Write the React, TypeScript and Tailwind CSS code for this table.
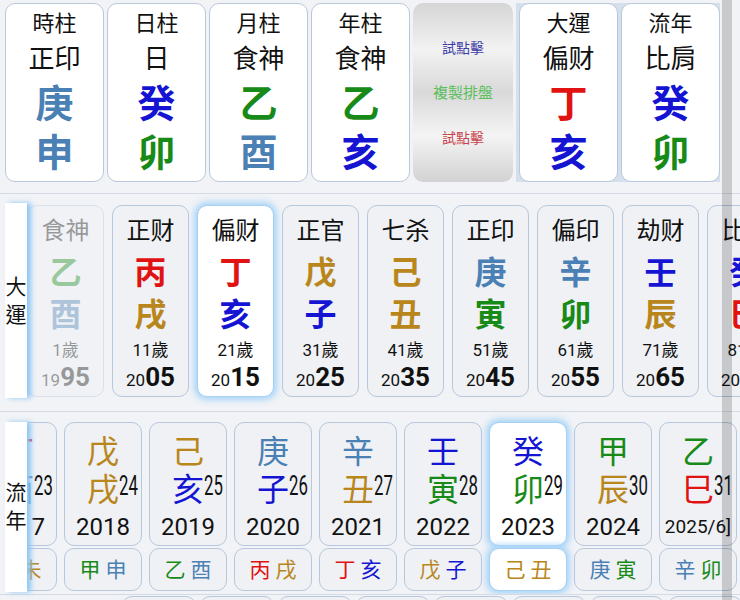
const COLOR: Record<string, string> = {
  甲: "text-[#178a17]",
  乙: "text-[#178a17]",
  寅: "text-[#178a17]",
  卯: "text-[#178a17]",
  丙: "text-[#e01212]",
  丁: "text-[#e01212]",
  巳: "text-[#e01212]",
  午: "text-[#e01212]",
  戊: "text-[#b8861a]",
  己: "text-[#b8861a]",
  辰: "text-[#b8861a]",
  戌: "text-[#b8861a]",
  丑: "text-[#b8861a]",
  未: "text-[#b8861a]",
  庚: "text-[#4a80b4]",
  辛: "text-[#4a80b4]",
  申: "text-[#4a80b4]",
  酉: "text-[#4a80b4]",
  壬: "text-[#1414d2]",
  癸: "text-[#1414d2]",
  子: "text-[#1414d2]",
  亥: "text-[#1414d2]",
};

const pillars = [
  { title: "時柱", god: "正印", stem: "庚", branch: "申" },
  { title: "日柱", god: "日", stem: "癸", branch: "卯" },
  { title: "月柱", god: "食神", stem: "乙", branch: "酉" },
  { title: "年柱", god: "食神", stem: "乙", branch: "亥" },
];

const luck = [
  { god: "食神", sb: "乙酉", age: 1, year: "1995", faded: true },
  { god: "正财", sb: "丙戌", age: 11, year: "2005" },
  { god: "偏财", sb: "丁亥", age: 21, year: "2015", active: true },
  { god: "正官", sb: "戊子", age: 31, year: "2025" },
  { god: "七杀", sb: "己丑", age: 41, year: "2035" },
  { god: "正印", sb: "庚寅", age: 51, year: "2045" },
  { god: "偏印", sb: "辛卯", age: 61, year: "2055" },
  { god: "劫财", sb: "壬辰", age: 71, year: "2065" },
  { god: "比肩", sb: "癸巳", age: 81, year: "2075" },
];

const years = [
  { sb: "丁酉", age: 23, year: "2017", sub: "癸未" },
  { sb: "戊戌", age: 24, year: "2018", sub: "甲申" },
  { sb: "己亥", age: 25, year: "2019", sub: "乙酉" },
  { sb: "庚子", age: 26, year: "2020", sub: "丙戌" },
  { sb: "辛丑", age: 27, year: "2021", sub: "丁亥" },
  { sb: "壬寅", age: 28, year: "2022", sub: "戊子" },
  { sb: "癸卯", age: 29, year: "2023", sub: "己丑", active: true },
  { sb: "甲辰", age: 30, year: "2024", sub: "庚寅" },
  { sb: "乙巳", age: 31, year: "2025/6]", sub: "辛卯" },
];

function PillarCard({ title, god, stem, branch }: { title: string; god: string; stem: string; branch: string }) {
  return (
    <div className="flex h-[179px] w-[99px] shrink-0 flex-col items-center rounded-[10px] border border-[#b9c8dc] bg-white pt-[6px] text-[#111]">
      <div className="text-[22px] leading-[28px]">{title}</div>
      <div className="mt-[4px] text-[26px] leading-[34px]">{god}</div>
      <div className={`mt-[4px] text-[38px] font-bold leading-[48px] ${COLOR[stem]}`}>{stem}</div>
      <div className={`mt-[1px] text-[38px] font-bold leading-[48px] ${COLOR[branch]}`}>{branch}</div>
    </div>
  );
}

function SideLabel({ text, className }: { text: string; className: string }) {
  return (
    <div
      className={`relative z-10 ml-[5px] flex w-[22px] shrink-0 flex-col items-center justify-center bg-white text-[21px] leading-[28px] text-[#111] shadow-[4px_0_5px_#8cc6f4] ${className}`}
    >
      {text.split("").map((c) => (
        <span key={c}>{c}</span>
      ))}
    </div>
  );
}

function LuckCard({ god, sb, age, year, faded, active }: (typeof luck)[number] & { active?: boolean; faded?: boolean }) {
  return (
    <div
      className={`flex h-[192px] w-[77px] shrink-0 flex-col items-center rounded-[10px] border pt-[11px] text-[#111] ${
        active
          ? "border-[#a6d0f5] bg-white shadow-[0_0_6px_3px_#a9d5f8]"
          : "border-[#b7c7dc] bg-[#eff1f5]"
      } ${faded ? "opacity-40" : ""}`}
    >
      <div className="text-[24px] leading-[28px]">{god}</div>
      <div className={`mt-[7px] text-[32px] font-bold leading-[42px] ${COLOR[sb[0]]}`}>{sb[0]}</div>
      <div className={`text-[32px] font-bold leading-[42px] ${COLOR[sb[1]]}`}>{sb[1]}</div>
      <div className="mt-[2px] text-[17px] leading-[24px]">{age}歲</div>
      <div className="leading-[30px]">
        <span className="text-[17px]">{year.slice(0, 2)}</span>
        <span className="text-[26px] font-bold">{year.slice(2)}</span>
      </div>
    </div>
  );
}

function YearColumn({ sb, age, year, sub, active }: (typeof years)[number] & { active?: boolean }) {
  const box = active
    ? "border-[#a6d0f5] bg-white shadow-[0_0_6px_3px_#a9d5f8]"
    : "border-[#b7c7dc] bg-[#eff1f5]";
  return (
    <div className="flex w-[78px] shrink-0 flex-col gap-[2px]">
      <div className={`flex h-[124px] flex-col items-center rounded-[10px] border pt-[10px] text-[#111] ${box}`}>
        <div className={`text-[32px] leading-[38px] ${COLOR[sb[0]]}`}>{sb[0]}</div>
        <div className={`relative text-[32px] leading-[38px] ${COLOR[sb[1]]}`}>
          {sb[1]}
          <span className="absolute left-full top-[1px] origin-left scale-x-[0.6] text-[28px] leading-[28px] text-[#111]">
            {age}
          </span>
        </div>
        <div className={`mt-[3px] leading-[30px] ${year.length > 4 ? "text-[19px]" : "text-[24px]"}`}>{year}</div>
      </div>
      <div className={`flex h-[43px] items-center justify-center gap-[5px] rounded-[10px] border text-[21px] leading-[28px] ${box}`}>
        <span className={COLOR[sub[0]]}>{sub[0]}</span>
        <span className={COLOR[sub[1]]}>{sub[1]}</span>
      </div>
    </div>
  );
}

export default function App() {
  return (
    <div className="relative h-[600px] w-[740px] overflow-hidden bg-[#f1f3f6] font-['Roboto','Noto_Sans_CJK_TC',sans-serif]">
      {/* four pillars + luck */}
      <div className="flex h-[193px] gap-[3px] pl-[5px] pt-[3px]">
        {pillars.map((p) => (
          <PillarCard key={p.title} {...p} />
        ))}
        <div className="flex h-[179px] w-[100px] shrink-0 flex-col items-center justify-center gap-[25px] rounded-[10px] bg-[linear-gradient(180deg,#d5d5d5_0%,#f2f2f2_26%,#d9d9d9_50%,#f4f4f4_74%,#d2d2d2_100%)] leading-[20px]">
          <span className="text-[14px] text-[#3b3ba6]">試點擊</span>
          <span className="text-[15px] text-[#5cbf5c]">複製排盤</span>
          <span className="text-[14px] text-[#c8404c]">試點擊</span>
        </div>
        <div className="flex h-[179px] gap-[3px] bg-[#d6e0ed] pl-[3px]">
          <PillarCard title="大運" god="偏财" stem="丁" branch="亥" />
          <PillarCard title="流年" god="比肩" stem="癸" branch="卯" />
        </div>
      </div>

      {/* 大運 */}
      <div className="flex h-[218px] items-start border-t border-[#d5dbe4]">
        <SideLabel text="大運" className="mt-[9px] h-[195px]" />
        <div className="flex flex-1 gap-[8px] self-stretch overflow-hidden pt-[11px]">
          {luck.map((l) => (
            <LuckCard key={l.year} {...l} />
          ))}
        </div>
      </div>

      {/* 流年 */}
      <div className="flex h-[183px] items-start border-t border-[#d5dbe4]">
        <SideLabel text="流年" className="mt-[10px] h-[170px]" />
        <div className="flex flex-1 gap-[7px] self-stretch overflow-hidden pt-[10px]">
          <div className="ml-[-48px] flex gap-[7px]">
            {years.map((y) => (
              <YearColumn key={y.year} {...y} />
            ))}
          </div>
        </div>
      </div>

      {/* next row peeking in */}
      <div className="flex gap-[4px] border-t border-[#d5dbe4] pl-[122px] pt-[1px]">
        {[0, 1, 2, 3, 4, 5, 6, 7].map((i) => (
          <div key={i} className="h-[20px] w-[74px] shrink-0 rounded-t-[10px] border border-[#b7c7dc] bg-[#eff1f5]" />
        ))}
      </div>

      {/* scrollbar */}
      <div className="absolute bottom-0 left-[722px] top-0 w-[10px] bg-black/[0.17]" />
    </div>
  );
}
